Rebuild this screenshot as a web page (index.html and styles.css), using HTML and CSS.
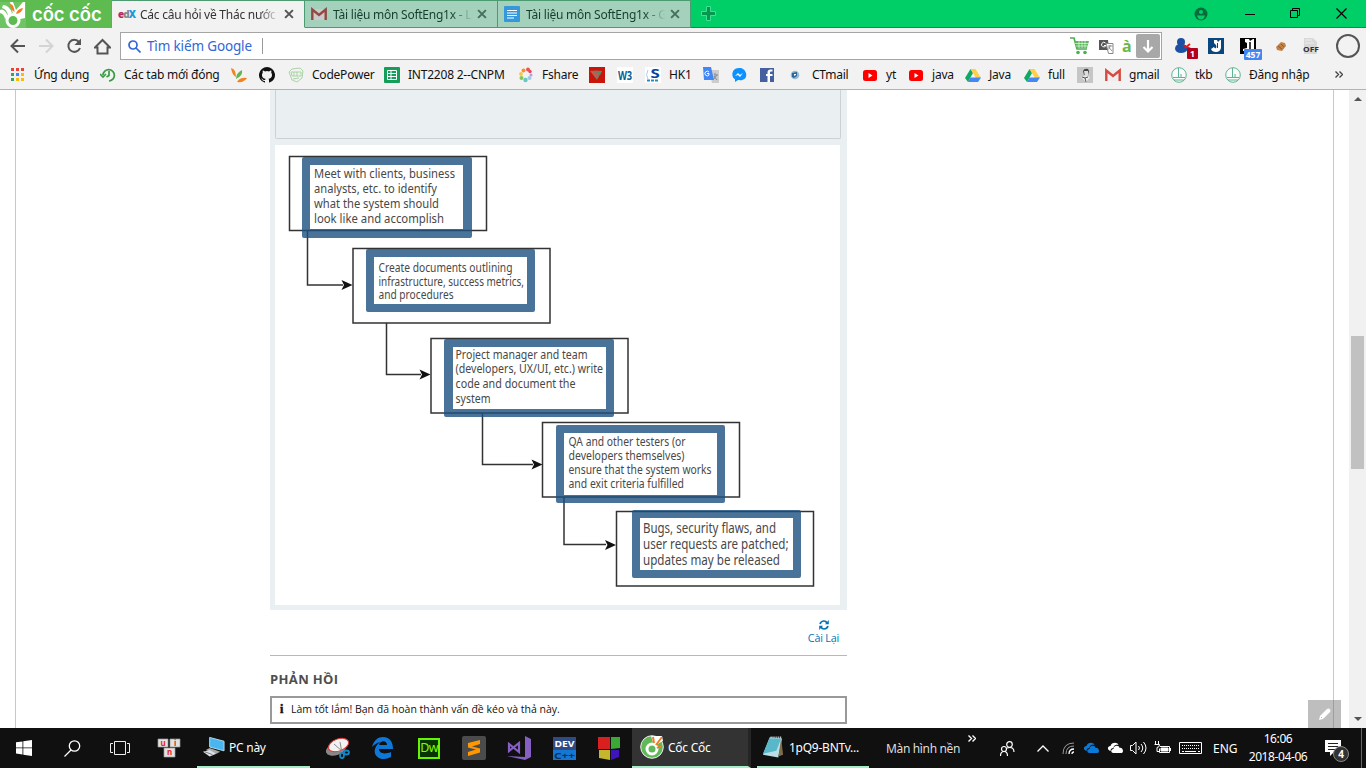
FILE: index.html
```
<!DOCTYPE html>
<html lang="vi">
<head>
<meta charset="utf-8">
<title>Các câu hỏi về Thác nước</title>
<link rel="stylesheet" href="styles.css">
</head>
<body>
<svg class="defs" width="0" height="0">
  <symbol id="close" viewBox="0 0 9 9"><path d="M1 1l7 7M8 1L1 8" stroke="currentColor" stroke-width="1.8" fill="none"/></symbol>
  <symbol id="youtube" viewBox="0 0 16 16"><rect x="1" y="3" width="14" height="11" rx="2.5" fill="#f00"/><path d="M6.5 6v5l4-2.5z" fill="#fff"/></symbol>
  <symbol id="drive" viewBox="0 0 16 16"><path d="M5.5 2L0 11l3 4 5-9z" fill="#11a861"/><path d="M5.500 2h5L16 11h-5z" fill="#ffcf48"/><path d="M5.500 10.500H16L13 15H3z" fill="#4587f4"/></symbol>
  <symbol id="gmail" viewBox="0 0 16 16"><path d="M1 3h14v11H1z" fill="#eee"/><path d="M1.300 14V3.500L8 9l6.700-5.500V14" fill="none" stroke="#d54b3d" stroke-width="2.400"/></symbol>
  <symbol id="school" viewBox="0 0 16 16"><circle cx="8" cy="8" r="7.300" fill="#f7fbf9" stroke="#62b392"/><path d="M7.500 1v9.500M2 10.500h12M10 7v3M3 13h10" stroke="#62b392" fill="none"/></symbol>
  <symbol id="cloud" viewBox="0 0 16 12"><path d="M3 9C-1 8 0 4 3 4c1-4 7-4 8-1-4-1-5 2-5 3-2 0-3 1-3 3z"/><path d="M6 11c-3 0-3-4 0-4 0-4 6-4 6-1 3-1 5 4 2 5z"/></symbol>
</svg>

<header class="tabstrip">
  <div class="brand">
    <svg width="26" height="28" viewBox="0 0 26 28"><path d="M0 28V2h26v26z" fill="#6cc562"/><g fill="#fff"><path d="M0 10q4-2 8 6l-3 3q-1-5-5-6zM3 5q6 0 9 8l-4 3Q7 9 2 8zM10 2h15v16l-9 2-3-6z"/></g><path d="M13 2h10l-7 8z" fill="#6cc562"/><circle cx="13" cy="20.500" r="6" fill="#5dbb50" stroke="#fff" stroke-width="3"/><path d="M10 4q4 0 4.500 8Q10 9 10 4zM16 14q1-5 7-6-1 5-7 6z" fill="#f47b20"/></svg>
    <span class="wordmark">cốc cốc</span>
  </div>
  <div class="tab tab-active">
    <span class="edx"><b class="e">e</b><b class="d">d</b><b class="x">X</b></span><span class="tab-title">Các câu hỏi về Thác nước v</span><svg class="tab-close" width="10" height="10"><use href="#close"/></svg>
  </div>
  <div class="tab">
    <svg class="tab-icon dull" width="16" height="16"><use href="#gmail"/></svg><span class="tab-title">Tài liệu môn SoftEng1x - Lo</span><svg class="tab-close" width="10" height="10"><use href="#close"/></svg>
  </div>
  <div class="tab">
    <svg class="tab-icon" width="16" height="16" viewBox="0 0 16 16"><rect width="16" height="16" rx="1" fill="#3498db"/><path d="M3 4.500h10M3 7h10M3 9.500h10M3 12h7" stroke="#fff" fill="none"/></svg><span class="tab-title">Tài liệu môn SoftEng1x - Go</span><svg class="tab-close" width="10" height="10"><use href="#close"/></svg>
  </div>
  <svg class="newtab" width="15" height="15" viewBox="0 0 15 15"><path d="M5.500 .5h4v5H14.500v4H9.500V14.500h-4V9.500H.5v-4h5z" fill="#05994f" stroke="#43df93"/></svg>
  <div class="window-controls">
    <svg width="14" height="14" viewBox="0 0 14 14"><circle cx="7" cy="7" r="6.500" fill="#086b3a"/><circle cx="7" cy="5" r="2" fill="#00cf68"/><path d="M3 8.500h8q-1 4-4 4t-4-4z" fill="#00cf68"/></svg>
    <svg width="10" height="12" viewBox="0 0 10 12"><path d="M0 6.500h10" stroke="#000"/></svg>
    <svg width="11" height="11" viewBox="0 0 11 11" fill="none" stroke="#000"><path d="M.5 2.500h7v7h-7zM2.500 2V.5h7v7H8"/></svg>
    <svg width="11" height="11" viewBox="0 0 11 11"><path d="M.5.5l10 10M10.500.5l-10 10" stroke="#000" stroke-width="1.200"/></svg>
  </div>
</header>

<nav class="toolbar">
  <div class="nav-buttons">
    <svg width="16" height="16" viewBox="0 0 16 16"><path d="M15 8H2M8 1.500L1.500 8 8 14.500" fill="none" stroke="#555" stroke-width="2"/></svg>
    <svg width="16" height="16" viewBox="0 0 16 16"><path d="M1 8h13M8 1.500L14.500 8 8 14.500" fill="none" stroke="#d4d4d4" stroke-width="2"/></svg>
    <svg width="16" height="16" viewBox="0 0 16 16"><path d="M13 4A6 6 0 1 0 14 10" fill="none" stroke="#555" stroke-width="2"/><path d="M15 .5v6.500H8.500z" fill="#555"/></svg>
    <svg width="17" height="17" viewBox="0 0 17 17"><path d="M1 9.500L8.500 2 16 9.500h-2.500V15.500h-10V9.500z" fill="none" stroke="#555" stroke-width="2"/></svg>
  </div>
  <div class="omnibox">
    <svg width="13" height="13" viewBox="0 0 13 13" fill="none" stroke="#3367d6" stroke-width="1.700"><circle cx="5" cy="5" r="4"/><path d="M8 8l4.500 4.500"/></svg>
    <span class="placeholder">Tìm kiếm Google</span><i class="caret"></i>
    <svg class="cart" width="19" height="18" viewBox="0 0 19 18"><path d="M0 1h4l3 11h10" fill="none" stroke="#4caf50" stroke-width="1.700"/><path d="M5 4h14l-2 7H7z" fill="#5cb85c"/><path d="M5 6.500h13M6 9h12M9 4v7M12 4v7M15 4v7" stroke="#fff" stroke-width=".6"/><circle cx="8" cy="15.500" r="1.800" fill="#4caf50"/><circle cx="15" cy="15.500" r="1.800" fill="#4caf50"/></svg>
    <svg class="trans" width="15" height="15" viewBox="0 0 15 15"><path d="M0 1h9l1 10H0z" fill="#555"/><path d="M7 4.500h7v10H9.500z" fill="#fff" stroke="#888"/><path d="M6.500 4A2.300 2.300 0 1 0 7 6.500H5" stroke="#fff" fill="none"/><path d="M8.500 7h5M11 6c0 3-1 4-2.500 5M9.500 8l3.500 4" stroke="#777" fill="none" stroke-width=".8"/></svg>
    <b class="accent">à</b>
    <span class="download"><svg width="14" height="16" viewBox="0 0 14 16"><path d="M7 2v11M2.500 9L7 13.500 11.500 9" fill="none" stroke="#fff" stroke-width="2.200"/></svg></span>
  </div>
  <div class="extensions">
    <span class="ext"><svg width="20" height="18" viewBox="0 0 20 18"><circle cx="6" cy="5" r="4" fill="#1c50a3"/><path d="M0 12q0-5 6-5t7 5q-2 4-7 4t-6-4z" fill="#1c50a3"/><path d="M8 8l8 4M15 7l-5 4" stroke="#e11" stroke-width="1.800"/></svg><em class="badge badge-red">1</em></span>
    <svg width="16" height="16" viewBox="0 0 16 16"><path d="M0 0h16v16H0z" fill="#0a4680"/><path d="M6 2h3l1 2 2-2h1v8q-1 4-5 4-4 0-5-3l3-2q1 2 2 1t0-3l-2-2z" fill="#fff"/><path d="M9.500 5v5" stroke="#0a4680"/></svg>
    <span class="ext"><svg width="16" height="16" viewBox="0 0 16 16"><path d="M0 0h16v16H0z" fill="#000"/><path d="M5 1h4l1 2 3-2h1v12H3v-2l4-1V5L5 4z" fill="#fff"/><path d="M10 4v7" stroke="#000" stroke-width="1.500"/></svg><em class="badge badge-blue">457</em></span>
    <svg width="12" height="12" viewBox="0 0 12 12"><path d="M1 7l5-5 4 1 1 3-4 5-5-1z" fill="#c38245"/><path d="M3 6l4 3M6 4l3 3" stroke="#8c552a"/></svg>
    <svg width="16" height="18" viewBox="0 0 16 18"><path d="M1 1h9l4 4v12H1z" fill="#d8d8d8"/><path d="M2 3h7M2 6h9" stroke="#eee"/><text x="0" y="15" font-size="7.500" font-weight="bold" textLength="16" lengthAdjust="spacingAndGlyphs" fill="#333">OFF</text></svg>
    <i class="circle"></i>
  </div>
</nav>

<nav class="bookmarks">
  <a><svg width="16" height="16" viewBox="0 0 16 16" shape-rendering="crispEdges"><path d="M1 1h3v3H1zM6 1h3v3H6zM11 1h3v3H11z" fill="#e84435"/><path d="M1 6h3v3H1zM1 11h3v3H1z" fill="#34a853"/><path d="M6 6h3v3H6z" fill="#4285f4"/><path d="M11 6h3v3H11zM6 11h3v3H6zM11 11h3v3H11z" fill="#fbbc05"/></svg>Ứng dụng</a>
  <a><svg width="16" height="16" viewBox="0 0 16 16" fill="none" stroke="#3c9a45" stroke-width="1.700"><path d="M3 8A5.700 5.700 0 1 1 9 14M0 7l3 3 3-3M9 4v4.500L6.500 10"/></svg>Các tab mới đóng</a>
  <a><svg width="16" height="16" viewBox="0 0 16 16"><path d="M0 1q5 1 5 9Q1 8 0 1zM6 15q3-5 10-4-3 5-10 4z" fill="#f58220"/><path d="M5 12q0-6 6-9 1 6-6 9z" fill="#63b54d"/></svg></a>
  <a><svg width="16" height="16" viewBox="0 0 16 16"><path fill="#111" d="M8 0a8 8 0 0 0-2.500 15.600c.4.100.5-.2.500-.4V14c-2 .5-2.500-.9-2.500-.9-.5-1-1-1.200-1-1.200-.7-.5 0-.5 0-.5 1 0 1.300.8 1.300.8.700 1.200 1.900.9 2.300.7l.5-1.100c-1.800-.2-3.600-.9-3.600-4 0-.9.300-1.600.8-2.100-.1-.2-.4-1 .1-2.100 0 0 .7-.2 2.100.8a7 7 0 0 1 4 0c1.500-1 2.100-.8 2.100-.8.500 1.100.2 1.900.1 2.100.5.500.8 1.200.8 2.100 0 3.100-1.800 3.800-3.600 4 .4.300.6.800.6 1.600v1.800c0 .2.100.5.500.4A8 8 0 0 0 8 0z"/></svg></a>
  <a><svg width="16" height="16" viewBox="0 0 16 16" fill="none" stroke="#a3cf9d" stroke-width=".9"><path d="M1 5l3-3 8-1 3 3-1 7-5 4-5-2zM3 5h10v4H4zM6 5v4M9 5v4M5 12l6-1"/></svg>CodePower</a>
  <a><svg width="16" height="16" viewBox="0 0 16 16"><rect width="16" height="16" rx="1" fill="#149e5a"/><path d="M3.500 3.500h9v9h-9zM3.500 6.500h9M3.500 9.500h9M7 4v8" fill="none" stroke="#fff"/></svg>INT2208 2--CNPM</a>
  <a><svg width="16" height="16" viewBox="0 0 16 16"><circle cx="5.500" cy="3.500" r="2" fill="#fb8c3c"/><circle cx="10" cy="2.500" r="2" fill="#ef5350"/><circle cx="12" cy="4.500" r="1.700" fill="#e9465f"/><circle cx="3" cy="7" r="1.900" fill="#f7c54a"/><circle cx="3.500" cy="11" r="2" fill="#88c651"/><circle cx="7.500" cy="13" r="2.200" fill="#64c8c4"/><circle cx="11.500" cy="11" r="2" fill="#a4c8e8"/><circle cx="13" cy="8" r="1.500" fill="#b5a2d4"/></svg>Fshare</a>
  <a><svg width="16" height="16" viewBox="0 0 16 16"><path d="M0 0h16v16H0z" fill="#c91409"/><path d="M1 4q6-1 12 0l-5 9z" fill="#87735f"/><path d="M3 5l4 3 5-3M5 7l3 4" stroke="#e85041" fill="none"/><path d="M8 5l5-1-2 4z" fill="#568b61"/></svg></a>
  <a><svg width="16" height="16" viewBox="0 0 16 16"><path d="M0 0h16v16H0z" fill="#fff"/><text x="1" y="13" font-size="13" font-weight="bold" textLength="14" lengthAdjust="spacingAndGlyphs" fill="#086097">W3</text></svg></a>
  <a><svg width="16" height="16" viewBox="0 0 16 16"><path d="M0 0h16v16H0z" fill="#fff"/><text x="5.500" y="10.500" font-size="13" font-weight="bold" textLength="9" lengthAdjust="spacingAndGlyphs" fill="#09439b">S</text><path d="M3 3Q0 8 3 12" stroke="#abcce8" fill="none"/><path d="M2 13.500h3M6 13.500h3M10 13.500h3" stroke="#248bc1" stroke-width="2"/></svg>HK1</a>
  <a><svg width="16" height="16" viewBox="0 0 16 16"><path d="M6 3h10v13H9z" fill="#ccc"/><path d="M0 0h8l3 13H1z" fill="#4285f4"/><path d="M6 5A2.300 2.300 0 1 0 6 8V6.500H4" stroke="#fff" fill="none"/><path d="M11 8h4M12 6v2M14 8l-4 5M11 9l3 4" stroke="#7f8990"/></svg></a>
  <a><svg width="16" height="16" viewBox="0 0 16 16"><path d="M7 1C-1 1-1 11 3 12v3l3-2c7 1 9-3 8-7-1-3-3-5-7-5z" fill="#0c91ff"/><path d="M3 9l3-3 2 2 3-2-3 4-2-2z" fill="#fff"/></svg></a>
  <a><svg width="16" height="16" viewBox="0 0 16 16"><path d="M0 1h14v14H0z" fill="#4460a0"/><path d="M10 15V9h2.500V7H10V5.500q0-1 1-1h1.500v-2h-2q-3 0-3 3V7H6v2h1.500v6z" fill="#fff"/></svg></a>
  <a><svg width="16" height="16" viewBox="0 0 16 16"><circle cx="7" cy="8" r="4.300" fill="#9cb8cd"/><path d="M4 10V6l5-1v4l-3 2z" fill="#286aa0"/><path d="M6 9V7h2v1z" fill="#fff"/></svg>CTmail</a>
  <a><svg width="16" height="16"><use href="#youtube"/></svg>yt</a>
  <a><svg width="16" height="16"><use href="#youtube"/></svg>java</a>
  <a><svg width="16" height="16"><use href="#drive"/></svg>Java</a>
  <a><svg width="16" height="16"><use href="#drive"/></svg>full</a>
  <a><svg width="16" height="16" viewBox="0 0 16 16"><path d="M0 0h16v16H0z" fill="#c6c6c6"/><path d="M6 4q1-3 5-2l1 2-1 4H7z" fill="#444"/><path d="M7 4h4v4l-1 2H8z" fill="#ddd"/><path d="M4 10l4-1 5 1-4 5z" fill="#eee"/><path d="M5 10l3 1 3-1M8 11l1 4" stroke="#555" fill="none"/></svg></a>
  <a><svg width="16" height="16"><use href="#gmail"/></svg>gmail</a>
  <a><svg width="16" height="16"><use href="#school"/></svg>tkb</a>
  <a><svg width="16" height="16"><use href="#school"/></svg>Đăng nhập</a>
  <svg width="8" height="7" viewBox="0 0 8 7"><path d="M.5.5l3 3-3 3M4.500.5l3 3-3 3" fill="none" stroke="#444" stroke-width="1.400"/></svg>
</nav>

<div class="viewport">
  <main class="page">
    <section class="exercise">
      <div class="puzzle">
        <div class="item-bank"></div>
        <svg class="target" width="565" height="460" viewBox="275 145 565 460">
          <g class="stages">
            <path d="M289.500 156.500h197v74h-197zM353 248.500h197v74.500h-197zM431 338.500h197V413H431zM542.500 422.500h197V497h-197zM616.500 511.500h197V586h-197z"/>
            <path d="M307.500 231v54H343M386.500 323v51.500H421M482.500 413v51.500H533M564 497v47.500H606"/>
          </g>
          <path d="M352.500 285l-11-5 2.500 5-2.500 5zM430.500 374.500l-11-5 2.500 5-2.500 5zM542.500 464.500l-11-5 2.500 5-2.500 5zM616 545l-11-5 2.500 5-2.500 5z" fill="#111"/>
          <g fill="#fff"><path d="M310 165h153v64H310zM374 257h153v47H374zM453 347h153v62H453zM564 433h153v62H564zM640 518h153v52H640z"/></g>
          <g class="frames">
            <path d="M304 157h166q2 0 2 2v77q0 2-2 2H304q-2 0-2-2v-77q0-2 2-2zM310 165v64h153v-64z"/>
            <path d="M368 249h165q2 0 2 2v59q0 2-2 2H368q-2 0-2-2v-59q0-2 2-2zM374 257v47h153v-47z"/>
            <path d="M446 339h166q2 0 2 2v74q0 2-2 2H446q-2 0-2-2v-74q0-2 2-2zM453 347v62h153v-62z"/>
            <path d="M558 425h165q2 0 2 2v74q0 2-2 2H558q-2 0-2-2v-74q0-2 2-2zM564 433v62h153v-62z"/>
            <path d="M634 510h165q2 0 2 2v64q0 2-2 2H634q-2 0-2-2v-64q0-2 2-2zM640 518v52h153v-52z"/>
          </g>
          <g class="labels">
            <g font-size="12.800">
              <text x="314" y="178" textLength="141" lengthAdjust="spacingAndGlyphs">Meet with clients, business</text>
              <text x="314" y="193" textLength="123" lengthAdjust="spacingAndGlyphs">analysts, etc. to identify</text>
              <text x="314" y="208" textLength="125" lengthAdjust="spacingAndGlyphs">what the system should</text>
              <text x="314" y="223" textLength="130" lengthAdjust="spacingAndGlyphs">look like and accomplish</text>
            </g>
            <g font-size="11.800">
              <text x="378.500" y="272" textLength="134" lengthAdjust="spacingAndGlyphs">Create documents outlining</text>
              <text x="378.500" y="285.500" textLength="145.500" lengthAdjust="spacingAndGlyphs">infrastructure, success metrics,</text>
              <text x="378.500" y="299" textLength="75" lengthAdjust="spacingAndGlyphs">and procedures</text>
            </g>
            <g font-size="12">
              <text x="455.500" y="359" textLength="132" lengthAdjust="spacingAndGlyphs">Project manager and team</text>
              <text x="455.500" y="373" textLength="147.500" lengthAdjust="spacingAndGlyphs">(developers, UX/UI, etc.) write</text>
              <text x="455.500" y="388" textLength="120" lengthAdjust="spacingAndGlyphs">code and document the</text>
              <text x="455.500" y="403" textLength="35" lengthAdjust="spacingAndGlyphs">system</text>
            </g>
            <g font-size="11.800">
              <text x="568.500" y="446" textLength="117" lengthAdjust="spacingAndGlyphs">QA and other testers (or</text>
              <text x="568.500" y="460" textLength="116" lengthAdjust="spacingAndGlyphs">developers themselves)</text>
              <text x="568.500" y="474" textLength="143" lengthAdjust="spacingAndGlyphs">ensure that the system works</text>
              <text x="568.500" y="488" textLength="115.500" lengthAdjust="spacingAndGlyphs">and exit criteria fulfilled</text>
            </g>
            <g font-size="13.500">
              <text x="643" y="532.500" textLength="133" lengthAdjust="spacingAndGlyphs">Bugs, security flaws, and</text>
              <text x="643" y="549" textLength="145.500" lengthAdjust="spacingAndGlyphs">user requests are patched;</text>
              <text x="643" y="565" textLength="137" lengthAdjust="spacingAndGlyphs">updates may be released</text>
            </g>
          </g>
        </svg>
      </div>
      <div class="actions">
        <button class="reset"><svg width="10" height="10" viewBox="0 0 10 10"><path d="M1 4q1-3 4-3 2 0 3 2M9 6q-1 3-4 3-2 0-3-2" fill="none" stroke="#0075b4" stroke-width="1.700"/><path d="M9.800 0v4.200H6zM.2 10V5.800H4z" fill="#0075b4"/></svg>Cài Lại</button>
      </div>
      <h3 class="feedback-title">PHẢN HỒI</h3>
      <div class="feedback"><b class="info">i</b><span>Làm tốt lắm! Bạn đã hoàn thành vấn đề kéo và thả này.</span></div>
    </section>
  </main>
  <button class="edit"><svg width="12" height="12" viewBox="0 0 12 12"><path d="M0 12l1-4 7-7q1.500-1 2.500 0l.5.500q1 1 0 2.500l-7 7z" fill="#fff"/><path d="M2 9l1 1" stroke="#bbb"/></svg></button>
  <div class="scrollbar"><i class="up"></i><i class="thumb"></i><i class="down"></i></div>
</div>

<footer class="taskbar">
  <span class="launch"><svg width="16" height="16" viewBox="0 0 16 16" fill="#fff"><path d="M0 2.300L6.500 1.400v6.100H0zM7.300 1.300L16 0v7.500H7.300zM0 8.300h6.500v6.200L0 13.600zM7.300 8.300H16V16l-8.700-1.300z"/></svg></span>
  <span class="launch"><svg width="17" height="17" viewBox="0 0 17 17" fill="none" stroke="#fff" stroke-width="1.300"><circle cx="10.500" cy="6" r="5.200"/><path d="M7 10L.5 16.500"/></svg></span>
  <span class="launch"><svg width="20" height="15" viewBox="0 0 20 15" fill="none" stroke="#eee"><path d="M4.500.5h11v13h-11zM3 2.500H.5v9H3M17 2.500h2.500v9H17"/></svg></span>
  <span class="launch"><svg width="24" height="20" viewBox="0 0 24 20"><path d="M1 1h10v8H1zM13 1h10v8H13zM7 10h11v9H7z" fill="#e2e2e2" stroke="#999" stroke-width=".7"/><g fill="#e22" font-size="8" font-weight="bold"><text x="3.500" y="7.500">u</text><text x="17" y="7.500">i</text><text x="10" y="17">n</text></g></svg></span>
  <span class="task task-pc"><svg width="23" height="22" viewBox="0 0 24 22"><path d="M8 1l15 4v10L8 11z" fill="#48b6f0" stroke="#b5ddeb"/><path d="M8 12l11 4-4 2-11-4z" fill="#aaa"/><path d="M1 16l7-2 7 4-7 3z" fill="#dde2e6"/><path d="M3 16l8 3" stroke="#777"/></svg>PC này</span>
  <span class="launch"><svg width="24" height="22" viewBox="0 0 24 22"><ellipse cx="10" cy="12" rx="10.500" ry="6" transform="rotate(-20 10 12)" fill="#888"/><ellipse cx="12.500" cy="8" rx="10.500" ry="6" transform="rotate(-20 12.500 8)" fill="#f2f2f2" stroke="#d33"/><path d="M8 7l9 8M14 5l2 11" stroke="#888"/><g fill="none" stroke="#1787c4" stroke-width="1.800"><ellipse cx="16" cy="18.500" rx="2" ry="2.700"/><ellipse cx="20.500" cy="15.500" rx="2.500" ry="2"/></g></svg></span>
  <span class="launch"><svg width="21" height="22" viewBox="0 0 21 22"><path fill="#0d78d7" d="M0 10C2 3 6 0 11 0c7 0 10 5 10 12H7c0 4 5 6 12 3v5C10 25 1 20 3 12 4 8 7 6 8 5 4 6 2 8 0 10zm7-2h8c0-5-7-5-8 0z"/></svg></span>
  <span class="launch dw">Dw</span>
  <span class="launch"><svg width="24" height="24" viewBox="0 0 24 24"><rect width="24" height="24" rx="2" fill="#4b4b4b"/><path d="M6 7l12-3v4l-8 2.500 8 2v4L6 20v-4l8-2.500-8-2z" fill="#ff9800"/></svg></span>
  <span class="launch"><svg width="24" height="24" viewBox="0 0 24 24"><path d="M18 0l6 3v18l-6 3L0 20l18 1z" fill="#865fc5"/><path d="M2 8v7l10-8v9z" fill="none" stroke="#865fc5" stroke-width="2.200"/></svg></span>
  <span class="launch"><svg width="23" height="23" viewBox="0 0 23 23"><path d="M0 0h23v23H0z" fill="#304b84"/><path d="M0 13h23v10H0z" fill="#1477d4"/><g font-weight="bold"><text x="1.500" y="10" font-size="9" textLength="20" lengthAdjust="spacingAndGlyphs" fill="#fff">DEV</text><text x="1" y="22" font-size="9" textLength="21" lengthAdjust="spacingAndGlyphs" fill="#083160">C++</text></g></svg></span>
  <span class="launch"><svg width="22" height="23" viewBox="0 0 22 23"><path d="M0 0h12v12H0z" fill="#d92021"/><path d="M13 0h9v11l-9 1z" fill="#3ca936"/><path d="M1 13h11v10L1 21z" fill="#c4b72e"/><path d="M13 13h8v7l-8 3z" fill="#4014bb"/></svg></span>
  <span class="task task-coc"><svg width="24" height="24" viewBox="0 0 24 24"><circle cx="12" cy="12" r="11.300" fill="#60b957" stroke="#eee"/><path d="M11 1l3 10 9-5-1-5z" fill="#fff"/><circle cx="12" cy="14" r="5" fill="#60b957" stroke="#fff" stroke-width="3"/><path d="M13 2l1 6M16 10l6-8M17 13l5-3" stroke="#f47b20" stroke-width="2"/></svg>Cốc Cốc</span>
  <span class="task task-note"><svg width="23" height="24" viewBox="0 0 24 24"><path d="M8 2l13 1-4 20-16-3z" fill="#b9dee7"/><path d="M8 2l12 1-5 13L1 19z" fill="#59b7ca"/><path d="M20 3l2 17-5 2z" fill="#806e4a"/><path d="M9 2h11" stroke="#eee" stroke-width="2" stroke-dasharray="1 1"/></svg>1pQ9-BNTv...</span>
  <span class="desk">Màn hình nền</span>
  <svg class="more" width="8" height="7" viewBox="0 0 8 7"><path d="M.5.5l3 3-3 3M4.500.5l3 3-3 3" fill="none" stroke="#fff" stroke-width="1.400"/></svg>
  <svg width="15" height="15" viewBox="0 0 15 15" fill="none" stroke="#fff" stroke-width="1.200"><circle cx="9.500" cy="3.500" r="2.800"/><circle cx="4" cy="8" r="2.500"/><path d="M.5 15q0-4.500 3.500-4.500T7.500 15M7 7q7-2 7 4"/></svg>
  <svg width="12" height="7" viewBox="0 0 12 7"><path d="M.5 6.500L6 1l5.500 5.500" fill="none" stroke="#fff" stroke-width="1.300"/></svg>
  <svg width="13" height="13" viewBox="0 0 13 13" fill="none"><path d="M1 12Q1 1 12 1M4 12q0-8 8-8" stroke="#999"/><path d="M7 12q0-5 5-5M10 12q0-2 2-2" stroke="#fff" stroke-width="1.300"/></svg>
  <svg width="17" height="12" viewBox="0 0 16 12" fill="#0a78d6"><use href="#cloud"/></svg>
  <svg width="17" height="12" viewBox="0 0 16 12" fill="#fff"><use href="#cloud"/></svg>
  <svg width="17" height="14" viewBox="0 0 17 14" fill="none" stroke="#fff"><path d="M.5 4.500h2L6 1v12L2.500 9.500h-2zM8.500 5q2 2 0 4M11 3q3.500 4 0 8M13.500 1q5 6 0 12"/></svg>
  <svg width="17" height="14" viewBox="0 0 17 14" fill="none" stroke="#fff"><path d="M6 5.500h9.500v6h-10v-4M16.500 7v3M1.500 0v3M4.500 0v3M.5 3.500h5q0 3-2.500 3v4h2"/><path d="M7 7h7v3H7z" fill="#fff"/></svg>
  <svg width="23" height="13" viewBox="0 0 23 13" fill="none" stroke="#fff"><path d="M.5.5h22v11H.5z"/><path d="M3 3.500h18M3 6.500h18" stroke-dasharray="1 1"/><path d="M3 9.500h2m1 0h11m2 0h2"/></svg>
  <span>ENG</span>
  <time class="clock"><span>16:06</span><span>2018-04-06</span></time>
  <span class="notices"><svg width="16" height="16" viewBox="0 0 16 16"><path d="M0 0h16v12H9l-4 4v-4H0z" fill="#fff"/><path d="M3 3.500h10M3 6.500h10M3 9.500h8" stroke="#222"/></svg><em>4</em></span>
  <i class="peek"></i>
</footer>
</body>
</html>
```
FILE: styles.css
```
* { box-sizing: border-box; }
body { margin: 0; width: 1366px; height: 768px; overflow: hidden; display: flex; flex-direction: column; background: #fff; color: #111; font: 12px "Noto Sans", "Open Sans", sans-serif; }
svg { display: block; flex: none; }
.defs { display: none; }
button { border: 0; padding: 0; font: inherit; }

.tabstrip { height: 28px; flex: none; display: flex; align-items: stretch; background: #00cf68; border-bottom: 1px solid #078f4c; }
.brand { width: 112px; height: 28px; background: #5dbb50; display: flex; align-items: flex-start; gap: 6px; border-right: 1px solid #66a577; }
.wordmark { color: #fff; font: 600 18.5px/29px Inter, "Noto Sans", sans-serif; letter-spacing: -.1px; white-space: nowrap; }
.tab { width: 193px; height: 28px; padding: 0 10px 0 6px; display: flex; align-items: center; background: #a3d1bb; color: #173e2c; border-top: 1px solid #4d9b70; border-right: 1px solid #4d9b70; border-bottom: 1px solid #4d9b70; }
.tab-active { background: #f2f2f2; color: #333; border-bottom-color: #f2f2f2; }
.tab-icon { margin-right: 6px; }
.tab-title { width: 141px; overflow: hidden; white-space: nowrap; letter-spacing: -.25px; -webkit-mask-image: linear-gradient(90deg, #000 84%, transparent 99%); mask-image: linear-gradient(90deg, #000 84%, transparent 99%); }
.tab-close { margin-left: auto; color: #47705c; }
.tab-active .tab-close { color: #555; }
.dull { filter: saturate(.65) brightness(.85); }
.edx { width: 16px; margin-right: 6px; display: flex; font: bold 10px "Open Sans", sans-serif; letter-spacing: -1px; }
.e { color: #b72667; }
.d { color: #888; }
.x { color: #159bdc; }
.newtab { margin: 6px 0 0 10px; }
.window-controls { margin-left: auto; padding-right: 19px; display: grid; grid-template-columns: 50px 45px 46px 11px; align-items: center; }
.window-controls svg:first-child { margin-left: -1px; }

.toolbar { height: 34px; flex: none; display: flex; align-items: center; background: #f2f2f2; }
.nav-buttons { width: 120px; padding: 2px 0 0 10px; display: flex; gap: 12px; }
.omnibox { width: 1042px; height: 28px; margin-top: 2px; padding: 0 1px 0 7px; display: flex; align-items: center; background: #fff; border: 1px solid #a5a5a5; }
.placeholder { width: 107px; margin-left: 6px; font-size: 13.5px; letter-spacing: -.15px; color: #3367d6; white-space: nowrap; }
.caret { width: 1px; height: 16px; margin-left: 8px; background: #999; }
.cart { margin-left: auto; }
.trans { margin-left: 10px; }
.accent { width: 10px; margin: 0 4px 0 8px; color: #67b94a; font-size: 16px; line-height: 20px; }
.download { width: 24px; height: 24px; display: grid; place-items: center; background: #a8a8a8; border-radius: 2px; }
.extensions { padding: 2px 0 0 13px; display: grid; grid-template-columns: 33px 32px 35px 28px 33px 24px; align-items: center; }
.ext { position: relative; }
.badge { position: absolute; height: 11px; color: #fff; font: bold 8.5px/11px "Open Sans", sans-serif; text-align: center; border-radius: 1px; }
.badge-red { left: 12px; top: 11px; width: 11px; background: #b5001c; }
.badge-blue { left: 4px; top: 11px; width: 18px; background: #4285f4; }
.circle { width: 24px; height: 24px; border: 2px solid #555; border-radius: 50%; }

.bookmarks { height: 28px; flex: none; padding: 0 0 2px 10px; display: grid; grid-template-columns: 90px 131px 28px 29px 96px 134px 71px 28px 28px 58px 29px 28px 28px 74px 46px 57px 59px 53px 28px 66px 54px 110px 8px; align-items: center; background: #f2f2f2; border-bottom: 1px solid #b3b3b3; white-space: nowrap; letter-spacing: -.22px; }
.bookmarks a { display: flex; align-items: center; gap: 8px; }

.viewport { height: 638px; flex: none; position: relative; display: flex; background: #fff; overflow: hidden; }
.page { width: 1319px; margin-left: 15px; border: solid #c8c8c8; border-width: 0 1px; }
.exercise { width: 577px; margin-left: 254px; }
.puzzle { height: 520px; padding: 0 6px 5px 5px; background: #eaeff2; }
.item-bank { height: 49px; width: 566px; margin-bottom: 6px; border: 1px solid #ccd1d4; border-top: 0; border-radius: 0 0 2px 2px; }
.target { background: #fff; }
.stages { fill: none; stroke: #333; stroke-width: 1.5; }
.frames { fill: #1d5080; fill-opacity: .8; fill-rule: evenodd; }
.labels { fill: #484848; }
.actions { height: 46px; padding: 10px 7px 0 0; display: flex; justify-content: flex-end; align-items: flex-start; border-bottom: 1px solid #b8b8b8; }
.reset { width: 33px; display: flex; flex-direction: column; align-items: center; background: none; color: #0075b4; font: 10.8px/14px "Open Sans", sans-serif; white-space: nowrap; letter-spacing: -.2px; gap: 1px; }
.feedback-title { margin: 13px 0 7px; font: 700 13px/20px "Open Sans", sans-serif; color: #4e4e4e; letter-spacing: .35px; }
.feedback { height: 28px; padding: 0 8px 2px; display: flex; align-items: center; border: 2px solid #999; font: 10.5px/20px "Open Sans", sans-serif; letter-spacing: 0; }
.info { width: 11px; font: bold 12px "Liberation Serif", serif; -webkit-text-stroke: .5px #111; }
.edit { position: absolute; left: 1308px; top: 610px; width: 33px; height: 28px; display: grid; place-items: center; background: rgba(100, 100, 100, .42); }
.scrollbar { width: 17px; margin-left: 15px; display: flex; flex-direction: column; align-items: center; background: #f1f1f1; }
.up { margin-top: 7px; border: 4px solid transparent; border-top: 0; border-bottom-color: #555; }
.thumb { width: 13px; height: 133px; margin-top: 235px; background: #c1c1c1; }
.down { margin: auto 0 7px; border: 4px solid transparent; border-bottom: 0; border-top-color: #555; }

.taskbar { height: 40px; flex: none; padding-left: 16px; display: grid; grid-template-columns: 48px 46px 47px 40px 129px 46px 46px 44px 45px 46px 45px 34px 125px 129px 82px 32px 37px 25px 21px 24px 23px 24px 25px 34px 36px 76px 36px 1px; align-items: center; background: #101010; color: #fff; white-space: nowrap; }
.dw { width: 22px; height: 21px; border: 2px solid #65f500; color: #8cf600; background: #073502; font: 12.5px/16px "Noto Sans", sans-serif; letter-spacing: -.7px; text-align: center; }
.task { height: 40px; display: flex; align-items: center; gap: 4px; border-bottom: 2px solid #a5edc8; padding: 0 0 0 5px; letter-spacing: -.25px; }
.task-pc { width: 113px; }
.task-coc { width: 119px; padding-left: 8px; background: #333; border-right: 3px solid #252525; }
.task-note { width: 112px; }
.desk { color: #ddd; letter-spacing: -.35px; }
.more { margin-bottom: 20px; }
.clock { display: flex; flex-direction: column; width: 58px; line-height: 18px; text-align: center; align-items: center; letter-spacing: -.4px; }
.notices { position: relative; }
.notices em { position: absolute; left: 8px; top: 6px; width: 16px; height: 16px; border: 1px solid #888; border-radius: 50%; background: #333; font: bold 10px/14px "Noto Sans", sans-serif; text-align: center; }
.peek { height: 40px; background: #666; }
```
